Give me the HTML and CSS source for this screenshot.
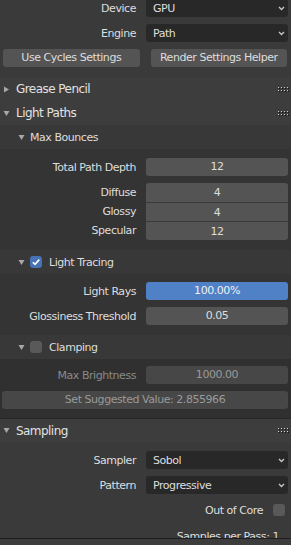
FILE: index.html
```html
<!DOCTYPE html>
<html lang="en">
<head>
  <meta charset="UTF-8" />
  <title>Render Properties</title>
  <link rel="stylesheet" href="styles.css">
</head>
<body>
  <div class="editor">
    <div class="props">

      <div class="top">
        <div class="row">
          <span class="label">Device</span>
          <div class="menu"><span>GPU</span><svg class="chev" width="7" height="5" viewBox="0 0 7 5"><path d="M1 1 L3.5 3.5 L6 1" /></svg></div>
        </div>
        <div class="row">
          <span class="label">Engine</span>
          <div class="menu"><span>Path</span><svg class="chev" width="7" height="5" viewBox="0 0 7 5"><path d="M1 1 L3.5 3.5 L6 1" /></svg></div>
        </div>
        <div class="buttons">
          <div class="btn">Use Cycles Settings</div>
          <div class="btn">Render Settings Helper</div>
        </div>
      </div>

      <div class="panel-head">
        <svg class="tri" width="7" height="7" viewBox="0 0 7 7"><polygon points="1,0.5 6,3.5 1,6.5" /></svg>
        <span class="title">Grease Pencil</span>
        <svg class="grip" width="11" height="5" viewBox="0 0 11 5"><g class="dots"><rect x="0" y="0" width="1" height="1"/><rect x="3" y="0" width="1" height="1"/><rect x="6" y="0" width="1" height="1"/><rect x="9" y="0" width="1" height="1"/><rect x="0" y="3" width="1" height="1"/><rect x="3" y="3" width="1" height="1"/><rect x="6" y="3" width="1" height="1"/><rect x="9" y="3" width="1" height="1"/></g><g class="shade"><rect x="1" y="1" width="1" height="1"/><rect x="4" y="1" width="1" height="1"/><rect x="7" y="1" width="1" height="1"/><rect x="10" y="1" width="1" height="1"/><rect x="1" y="4" width="1" height="1"/><rect x="4" y="4" width="1" height="1"/><rect x="7" y="4" width="1" height="1"/><rect x="10" y="4" width="1" height="1"/></g></svg>
      </div>

      <div class="panel-head">
        <svg class="tri" width="7" height="7" viewBox="0 0 7 7"><polygon points="0.5,1 6.5,1 3.5,6" /></svg>
        <span class="title">Light Paths</span>
        <svg class="grip" width="11" height="5" viewBox="0 0 11 5"><g class="dots"><rect x="0" y="0" width="1" height="1"/><rect x="3" y="0" width="1" height="1"/><rect x="6" y="0" width="1" height="1"/><rect x="9" y="0" width="1" height="1"/><rect x="0" y="3" width="1" height="1"/><rect x="3" y="3" width="1" height="1"/><rect x="6" y="3" width="1" height="1"/><rect x="9" y="3" width="1" height="1"/></g><g class="shade"><rect x="1" y="1" width="1" height="1"/><rect x="4" y="1" width="1" height="1"/><rect x="7" y="1" width="1" height="1"/><rect x="10" y="1" width="1" height="1"/><rect x="1" y="4" width="1" height="1"/><rect x="4" y="4" width="1" height="1"/><rect x="7" y="4" width="1" height="1"/><rect x="10" y="4" width="1" height="1"/></g></svg>
      </div>

      <div class="sub-head">
        <svg class="tri" width="7" height="7" viewBox="0 0 7 7"><polygon points="0.5,1 6.5,1 3.5,6" /></svg>
        <span class="title">Max Bounces</span>
      </div>
      <div class="body bounces">
        <div class="row">
          <span class="label">Total Path Depth</span>
          <div class="field">12</div>
        </div>
        <div class="stack">
          <div class="row"><span class="label">Diffuse</span><div class="field">4</div></div>
          <div class="row"><span class="label">Glossy</span><div class="field">4</div></div>
          <div class="row"><span class="label">Specular</span><div class="field">12</div></div>
        </div>
      </div>

      <div class="sub-head">
        <svg class="tri" width="7" height="7" viewBox="0 0 7 7"><polygon points="0.5,1 6.5,1 3.5,6" /></svg>
        <span class="check on"><svg width="12" height="12" viewBox="0 0 12 12"><path d="M2.8 6.2 L5 8.4 L9.3 3.6" /></svg></span>
        <span class="title">Light Tracing</span>
      </div>
      <div class="body tracing">
        <div class="row">
          <span class="label">Light Rays</span>
          <div class="field blue">100.00%</div>
        </div>
        <div class="row">
          <span class="label">Glossiness Threshold</span>
          <div class="field">0.05</div>
        </div>
      </div>

      <div class="sub-head">
        <svg class="tri" width="7" height="7" viewBox="0 0 7 7"><polygon points="0.5,1 6.5,1 3.5,6" /></svg>
        <span class="check"></span>
        <span class="title">Clamping</span>
      </div>
      <div class="body clamping">
        <div class="row off">
          <span class="label">Max Brightness</span>
          <div class="field">1000.00</div>
        </div>
        <div class="wide-btn">Set Suggested Value: 2.855966</div>
      </div>

      <div class="panel-head sampling">
        <svg class="tri" width="7" height="7" viewBox="0 0 7 7"><polygon points="0.5,1 6.5,1 3.5,6" /></svg>
        <span class="title">Sampling</span>
        <svg class="grip" width="11" height="5" viewBox="0 0 11 5"><g class="dots"><rect x="0" y="0" width="1" height="1"/><rect x="3" y="0" width="1" height="1"/><rect x="6" y="0" width="1" height="1"/><rect x="9" y="0" width="1" height="1"/><rect x="0" y="3" width="1" height="1"/><rect x="3" y="3" width="1" height="1"/><rect x="6" y="3" width="1" height="1"/><rect x="9" y="3" width="1" height="1"/></g><g class="shade"><rect x="1" y="1" width="1" height="1"/><rect x="4" y="1" width="1" height="1"/><rect x="7" y="1" width="1" height="1"/><rect x="10" y="1" width="1" height="1"/><rect x="1" y="4" width="1" height="1"/><rect x="4" y="4" width="1" height="1"/><rect x="7" y="4" width="1" height="1"/><rect x="10" y="4" width="1" height="1"/></g></svg>
      </div>
      <div class="body sampler">
        <div class="row">
          <span class="label">Sampler</span>
          <div class="menu"><span>Sobol</span><svg class="chev" width="7" height="5" viewBox="0 0 7 5"><path d="M1 1 L3.5 3.5 L6 1" /></svg></div>
        </div>
        <div class="row">
          <span class="label">Pattern</span>
          <div class="menu"><span>Progressive</span><svg class="chev" width="7" height="5" viewBox="0 0 7 5"><path d="M1 1 L3.5 3.5 L6 1" /></svg></div>
        </div>
        <div class="toggle-row">
          <span>Out of Core</span>
          <span class="check"></span>
        </div>
        <div class="info-row">Samples per Pass: 1</div>
      </div>

    </div>
    <div class="footer-strip"></div>
  </div>
</body>
</html>
```

FILE: styles.css
```css
* {
  box-sizing: border-box;
}
body {
  margin: 0;
  background: #3a3a3a;
  font-family: "DejaVu Sans", sans-serif;
  font-size: 11px;
  letter-spacing: -0.45px;
  color: #dedede;
}
.editor {
  width: 291px;
  height: 545px;
  overflow: hidden;
}
.props {
  height: 538px;
  overflow: hidden;
}
.top {
  display: flex;
  flex-direction: column;
  gap: 7px;
  margin-top: -1px;
  padding-bottom: 10px;
}
.row {
  display: grid;
  grid-template-columns: 1fr 142px;
  column-gap: 10px;
  height: 18px;
  align-items: center;
  padding: 0 3px 0 2px;
}
.label {
  text-align: right;
  white-space: nowrap;
}
.menu {
  height: 18px;
  background: #282828;
  border-radius: 3px;
  padding: 0 3px 0 7px;
  display: flex;
  align-items: center;
  justify-content: space-between;
}
.chev path {
  fill: none;
  stroke: #c8c8c8;
  stroke-width: 1.3;
}
.field {
  height: 18px;
  line-height: 18px;
  background: #545454;
  border-radius: 3px;
  text-align: center;
}
.field.blue {
  background: #5080c6;
  color: #f0f0f0;
}
.buttons {
  display: grid;
  grid-template-columns: 1fr 1fr;
  column-gap: 11px;
  padding: 0 4px 0 3px;
}
.btn {
  height: 18px;
  line-height: 18px;
  background: #545454;
  border-radius: 3px;
  text-align: center;
  white-space: nowrap;
}

/* panel headers */
.panel-head {
  display: flex;
  align-items: center;
  height: 24px;
  padding: 0 2px 0 3px;
  background: #3d3d3d;
  font-size: 12px;
  letter-spacing: -0.55px;
  color: #e2e2e2;
}
.panel-head .tri {
  margin-right: 6px;
}
.panel-head .title {
  flex: 1;
}
.tri polygon {
  fill: #a8a8a8;
}
.grip .dots rect {
  fill: #d0d0d0;
}
.grip .shade rect {
  fill: #141414;
}
.panel-head.sampling {
  border-top: 1px solid #262626;
}
.sub-head {
  display: flex;
  align-items: center;
  height: 24px;
  padding-left: 18px;
  background: #383838;
}
.sub-head .tri {
  margin-right: 5px;
}
.sub-head .check {
  margin-right: 7px;
}
.check {
  display: inline-block;
  width: 12px;
  height: 12px;
  border-radius: 3px;
  background: #595959;
}
.check.on {
  background: #4772b3;
}
.check svg {
  display: block;
}
.check path {
  fill: none;
  stroke: #ffffff;
  stroke-width: 1.6;
}

/* panel bodies */
.body {
  display: flex;
  flex-direction: column;
  gap: 7px;
  background: #343434;
}
.bounces {
  padding: 9px 0 10px;
}
.stack .row {
  height: 19px;
}
.stack .field {
  height: 19px;
  line-height: 19px;
  border-radius: 0;
  border-top: 1px solid #3a3a3a;
}
.stack .row:first-child .field {
  border-top: none;
  border-radius: 3px 3px 0 0;
}
.stack .row:last-child .field {
  border-radius: 0 0 3px 3px;
}
.tracing {
  padding: 8px 0 10px;
}
.clamping {
  padding: 7px 0 9px;
  background: #303030;
}
.row.off .label {
  color: #8a8a8a;
}
.row.off .field {
  background: #474747;
  color: #9a9a9a;
}
.wide-btn {
  margin: 0 3px 0 2px;
  height: 18px;
  line-height: 18px;
  background: #474747;
  border-radius: 3px;
  text-align: center;
  color: #9a9a9a;
}
.sampler {
  padding-top: 9px;
  background: #3a3a3a;
}
.toggle-row {
  display: flex;
  justify-content: flex-end;
  align-items: center;
  gap: 10px;
  height: 18px;
  padding-right: 6px;
}
.info-row {
  text-align: right;
  height: 18px;
  line-height: 18px;
  padding: 2px 12px 0 0;
}
.footer-strip {
  height: 7px;
  border-top: 1px solid #1e1e1e;
  background: #3c3c3c;
}
```
